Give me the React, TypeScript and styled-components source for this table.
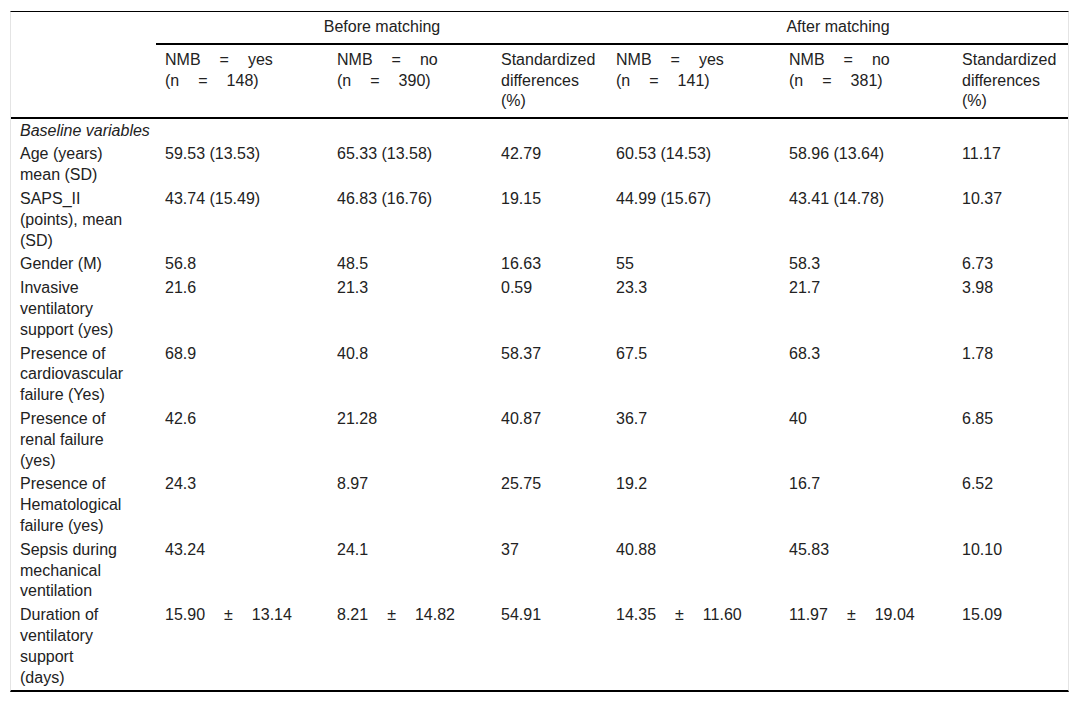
import React from 'react';
import styled, { createGlobalStyle } from 'styled-components';

const GlobalStyle = createGlobalStyle`
  html, body {
    margin: 0;
    padding: 0;
    background: #fff;
  }
  body {
    font-family: "Liberation Sans", Arial, sans-serif;
    color: #222;
  }
`;

const Page = styled.div`
  padding: 11px 10px 0 10px;
`;

const Table = styled.table`
  width: 1059px;
  table-layout: fixed;
  border-collapse: separate;
  border-spacing: 0;
  border-top: 1px solid #000;
  border-bottom: 2px solid #000;
  border-left: 1px solid #e4e4e4;
  border-right: 1px solid #e4e4e4;
  font-size: 16px;
  line-height: 20.8px;
`;

const Col = styled.col<{ $w: number }>`
  width: ${(p) => p.$w}px;
`;

const HeadCell = styled.th<{ $center?: boolean }>`
  padding: 5px 8px 5px 9px;
  font-weight: normal;
  text-align: ${(p) => (p.$center ? 'center' : 'left')};
  vertical-align: top;
  border-bottom: 2px solid #000;
`;

const SectionCell = styled.td`
  padding: 1.5px 8px 1.5px 9px;
  font-style: italic;
  text-align: left;
`;

const Cell = styled.td<{ $label?: boolean }>`
  padding: 1.5px ${(p) => (p.$label ? '24px' : '8px')} 1.5px 9px;
  vertical-align: top;
  text-align: left;
  white-space: ${(p) => (p.$label ? 'normal' : 'nowrap')};
`;

// wide spacing used around "=" and "±" in the source table
const Gap = styled.span`
  display: inline-block;
  width: 19px;
`;

const colWidths = [145, 172, 164, 115, 173, 173, 115];

type Row = { label: React.ReactNode; values: React.ReactNode[] };

const Spaced = ({ parts }: { parts: string[] }) => (
  <>
    {parts.map((part, i) => (
      <React.Fragment key={i}>
        {i > 0 && <Gap />}
        {part}
      </React.Fragment>
    ))}
  </>
);

const pm = (a: string, b: string) => <Spaced parts={[a, '±', b]} />;

const rows: Row[] = [
  { label: 'Age (years) mean (SD)', values: ['59.53 (13.53)', '65.33 (13.58)', '42.79', '60.53 (14.53)', '58.96 (13.64)', '11.17'] },
  { label: 'SAPS_II (points), mean (SD)', values: ['43.74 (15.49)', '46.83 (16.76)', '19.15', '44.99 (15.67)', '43.41 (14.78)', '10.37'] },
  { label: 'Gender (M)', values: ['56.8', '48.5', '16.63', '55', '58.3', '6.73'] },
  { label: 'Invasive ventilatory support (yes)', values: ['21.6', '21.3', '0.59', '23.3', '21.7', '3.98'] },
  { label: 'Presence of cardiovascular failure (Yes)', values: ['68.9', '40.8', '58.37', '67.5', '68.3', '1.78'] },
  { label: 'Presence of renal failure (yes)', values: ['42.6', '21.28', '40.87', '36.7', '40', '6.85'] },
  { label: 'Presence of Hematological failure (yes)', values: ['24.3', '8.97', '25.75', '19.2', '16.7', '6.52'] },
  { label: 'Sepsis during mechanical ventilation', values: ['43.24', '24.1', '37', '40.88', '45.83', '10.10'] },
  {
    label: (
      <>
        Duration of ventilatory support
        <br />
        (days)
      </>
    ),
    values: [pm('15.90', '13.14'), pm('8.21', '14.82'), '54.91', pm('14.35', '11.60'), pm('11.97', '19.04'), '15.09'],
  },
];

const Group = ({ value, n }: { value: string; n: number }) => (
  <HeadCell>
    <Spaced parts={['NMB', '=', value]} />
    <br />
    <Spaced parts={['(n', '=', `${n})`]} />
  </HeadCell>
);

const App = () => (
  <Page>
    <GlobalStyle />
    <Table>
      <colgroup>
        {colWidths.map((w, i) => (
          <Col key={i} $w={w} />
        ))}
      </colgroup>
      <thead>
        <tr>
          <HeadCell rowSpan={2} />
          <HeadCell colSpan={3} $center>
            Before matching
          </HeadCell>
          <HeadCell colSpan={3} $center>
            After matching
          </HeadCell>
        </tr>
        <tr>
          <Group value="yes" n={148} />
          <Group value="no" n={390} />
          <HeadCell>Standardized differences (%)</HeadCell>
          <Group value="yes" n={141} />
          <Group value="no" n={381} />
          <HeadCell>Standardized differences (%)</HeadCell>
        </tr>
      </thead>
      <tbody>
        <tr>
          <SectionCell colSpan={7}>Baseline variables</SectionCell>
        </tr>
        {rows.map((row, i) => (
          <tr key={i}>
            <Cell $label>{row.label}</Cell>
            {row.values.map((v, j) => (
              <Cell key={j}>{v}</Cell>
            ))}
          </tr>
        ))}
      </tbody>
    </Table>
  </Page>
);

export default App;
